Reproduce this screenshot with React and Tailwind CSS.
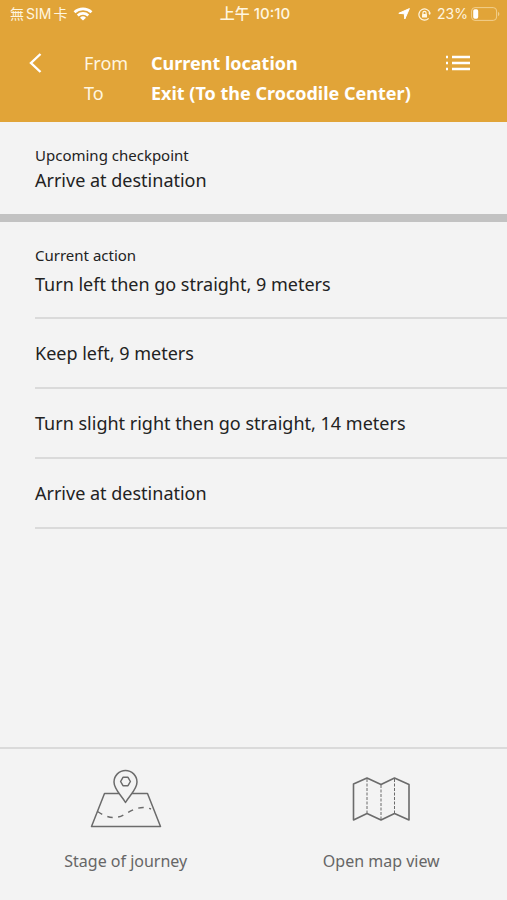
import React from 'react';

const steps = [
  'Keep left, 9 meters',
  'Turn slight right then go straight, 14 meters',
  'Arrive at destination',
];

const StatusBar = () => {
  return (
    <div className="grid h-7 grid-cols-[1fr_auto_1fr] items-center pl-[10px] pr-[7px] font-['Inter','Noto_Sans_CJK_TC',sans-serif] text-sm leading-5 text-[#fff6e0]">
      <div className="flex items-center gap-[6px]">
        <span>無<span className="mx-[2px]">SIM</span>卡</span>
        <svg className="h-[14px] w-5" viewBox="0 0 20 14" fill="none" stroke="#fff" strokeWidth="2.6">
          <path d="M1.5 5.2a12.4 12.4 0 0 1 17 0" />
          <path d="M4.7 8.5a7.8 7.8 0 0 1 10.6 0" />
          <path d="M10 13.6 7 10.7a4.4 4.4 0 0 1 6 0z" fill="#fff" stroke="none" />
        </svg>
      </div>
      <span className="text-[15px] font-medium">上午 10:10</span>
      <div className="flex items-center justify-end">
        <svg className="mr-2 h-3 w-3" viewBox="0 0 12 12" fill="#fff" stroke="#fff" strokeLinejoin="round">
          <path d="M11.4.6 6.8 11 6.3 5.8.8 5.3z" />
        </svg>
        <svg className="mr-[6px] h-[13px] w-[13px]" viewBox="0 0 13 13" fill="none" stroke="#fff6e0" strokeWidth="1.2">
          <path d="M11.9 5A5.6 5.6 0 1 0 10.6 10.4" />
          <path d="M10.2 4.8h2.6l-1 2.4z" fill="#fff6e0" stroke="none" />
          <path d="M4.9 6.2V5a1.6 1.6 0 0 1 3.2 0v1.2" />
          <rect x="4" y="6" width="5" height="3.6" rx="0.6" fill="#fff6e0" stroke="none" />
        </svg>
        <span>23%</span>
        <svg className="ml-[3px] h-[14px] w-[29px]" viewBox="0 0 29 14" fill="none">
          <rect x="0.6" y="0.6" width="25" height="12.8" rx="3.4" stroke="#f2cf8d" />
          <rect x="2.2" y="2.3" width="5" height="9.4" rx="1.6" fill="#fff" />
          <path d="M27 4.8v4.4q1.4-.7 1.4-2.2T27 4.8z" fill="#f2cf8d" />
        </svg>
      </div>
    </div>
  );
};

const JourneyIcon = () => (
  <svg className="h-[60px] w-[72px]" viewBox="0 0 72 60" fill="none" stroke="#6b6b6b" strokeWidth="1.5" strokeLinejoin="round">
    <path d="M29 24.5H14.5L1.5 57.5h69L57.5 24.5H42" />
    <path d="M35.5 33.5C31.5 26.5 24 20.5 24 13a11.5 11.5 0 0 1 23 0c0 7.5-7.5 13.5-11.5 20.5z" />
    <path d="M30.6 12.5 33 8.3h5l2.4 4.2-2.4 4.2h-5z" />
    <path d="M7.5 42.5c8 5.5 17 8.5 26 3.5S50 36 61 40" strokeDasharray="5.5 5.5" />
  </svg>
);

const MapIcon = () => (
  <svg className="h-[60px] w-[60px]" viewBox="0 0 60 60" fill="none" stroke="#6b6b6b" strokeWidth="1.6" strokeLinejoin="round">
    <path d="M2.500 15 16 9 30 15.500 43.500 9 58 15.500V51L43.500 44.500 30 51 16 44.500 2.500 51z" />
    <path d="M16 10v34M30 16v34M43.500 10v34" strokeWidth="1" strokeDasharray="3 1.500" />
  </svg>
);

const App = () => {
  return (
    <div className="flex min-h-screen flex-col bg-[#f3f3f3] font-['Noto_Sans',sans-serif] text-[#222]">
      <header className="bg-[#e1a438] pb-[14px] text-white">
        <StatusBar />
        <div className="mt-5 flex items-start pl-7 pr-9">
          <button type="button" aria-label="Back" className="flex h-[30px] w-4 items-center">
            <svg className="h-5 w-4" viewBox="0 0 16 20" fill="none" stroke="#fff" strokeWidth="2.4">
              <path d="M12.5 1 3 10l9.5 9" />
            </svg>
          </button>
          <dl className="ml-10 grid flex-1 grid-cols-[67px_1fr] text-lg leading-[30px]">
            <dt className="text-[#fff6e0]">From</dt>
            <dd className="font-bold">Current location</dd>
            <dt className="text-[#fff6e0]">To</dt>
            <dd className="font-bold">Exit (To the Crocodile Center)</dd>
          </dl>
          <button type="button" aria-label="Route list" className="flex h-[30px] items-center">
            <svg className="h-4 w-[26px]" viewBox="0 0 26 16" fill="#fff">
              <path d="M7 .8h18v2.4H7zM7 6.800h18v2.4H7zM7 12.800h18v2.4H7z" />
              <path d="M1 .8h2v2.4H1zM1 6.800h2v2.4H1zM1 12.800h2v2.4H1z" />
            </svg>
          </button>
        </div>
      </header>

      <section className="border-b-8 border-[#c2c2c2] px-[35px] pb-[22px] pt-5">
        <h2 className="text-[15px] leading-[26px]">Upcoming checkpoint</h2>
        <p className="text-lg leading-6">Arrive at destination</p>
      </section>

      <section className="pl-[35px] pt-5">
        <h2 className="text-[15px] leading-[26px]">Current action</h2>
        <ul className="text-lg leading-8">
          <li className="border-b-2 border-[#dadada] pb-[17px]">Turn left then go straight, 9 meters</li>
          {steps.map((step) => (
            <li key={step} className="border-b-2 border-[#dadada] py-[18px]">
              {step}
            </li>
          ))}
        </ul>
      </section>

      <nav className="mt-auto grid grid-cols-2 gap-1 border-t-2 border-[#dadada] pb-[23px] pt-5 text-base leading-8 text-[#666]">
        <button type="button" className="flex flex-col items-center gap-4">
          <JourneyIcon />
          Stage of journey
        </button>
        <button type="button" className="flex flex-col items-center gap-4">
          <MapIcon />
          Open map view
        </button>
      </nav>
    </div>
  );
};

export default App;
